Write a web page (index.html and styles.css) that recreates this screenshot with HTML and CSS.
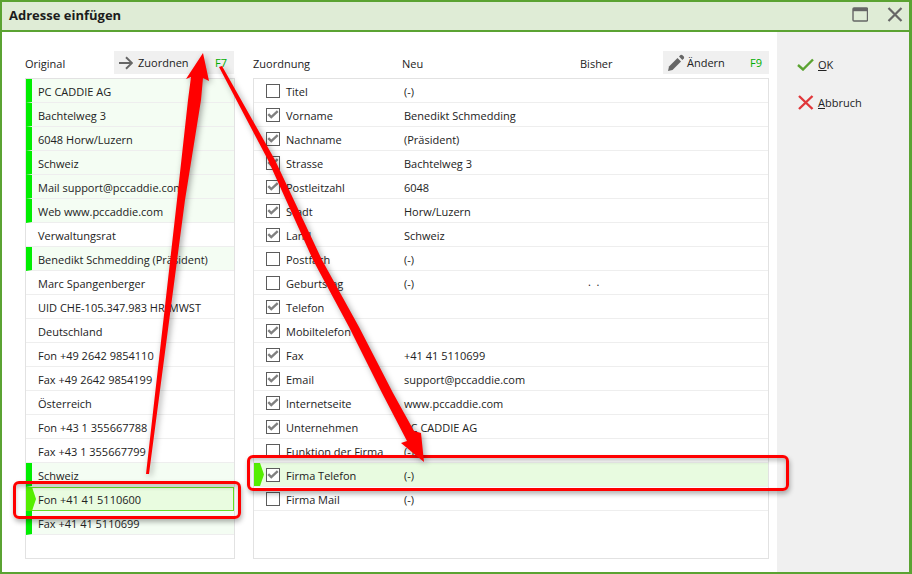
FILE: index.html
```html
<!DOCTYPE html>
<html lang="de">
<head>
<meta charset="utf-8">
<title>Adresse einfügen</title>
<link rel="stylesheet" href="styles.css">
</head>
<body>
<div class="window">
  <header class="titlebar">
    <h1 class="title">Adresse einfügen</h1>
    <div class="winctl">
      <svg class="ico-max" width="16" height="15" viewBox="0 0 16 15"><rect x="1" y="1" width="14.5" height="13" rx="1" fill="none" stroke="#666" stroke-width="1.4"/><rect x="1" y="1" width="14.5" height="3.2" fill="#666"/></svg>
      <svg class="ico-close" width="16" height="15" viewBox="0 0 16 15"><path d="M1.5 1 L14.5 14 M14.5 1 L1.5 14" stroke="#666" stroke-width="2.2" fill="none"/></svg>
    </div>
  </header>
  <div class="body">
    <main class="main">
      <section class="col col-left">
        <div class="head head-left">
          <span>Original</span>
          <div class="btn btn-assign">
            <svg width="14" height="14" viewBox="0 0 14 14"><path d="M0 7 H13 M7 1.2 L13 7 L7 12.8" fill="none" stroke="#666" stroke-width="1.9"/></svg>
            <span class="btn-label">Zuordnen</span>
            <span class="key">F7</span>
          </div>
        </div>
        <div class="list">
          <div class="row flag">PC CADDIE AG</div>
          <div class="row flag">Bachtelweg 3</div>
          <div class="row flag">6048 Horw/Luzern</div>
          <div class="row flag">Schweiz</div>
          <div class="row flag">Mail support@pccaddie.com</div>
          <div class="row flag">Web www.pccaddie.com</div>
          <div class="row">Verwaltungsrat</div>
          <div class="row flag">Benedikt Schmedding (Präsident)</div>
          <div class="row">Marc Spangenberger</div>
          <div class="row">UID CHE-105.347.983 HR/MWST</div>
          <div class="row">Deutschland</div>
          <div class="row">Fon +49 2642 9854110</div>
          <div class="row">Fax +49 2642 9854199</div>
          <div class="row">Österreich</div>
          <div class="row">Fon +43 1 355667788</div>
          <div class="row">Fax +43 1 355667799</div>
          <div class="row flag">Schweiz</div>
          <div class="row flag selected">Fon +41 41 5110600</div>
          <div class="row flag">Fax +41 41 5110699</div>
        </div>
      </section>
      <section class="col col-right">
        <div class="head head-right">
          <span>Zuordnung</span>
          <span>Neu</span>
          <span>Bisher</span>
          <div class="btn btn-change">
            <svg width="18" height="18" viewBox="0 0 18 18"><path d="M1 17 L2 12.5 L10.5 4 L14 7.5 L5.5 16 Z" fill="#666"/><path d="M12 2.5 L13.5 1 Q14.5 0.4 15.5 1.2 L16.8 2.5 Q17.5 3.5 16.8 4.5 L15.3 6 Z" fill="#666"/></svg>
            <span class="btn-label">Ändern</span>
            <span class="key">F9</span>
          </div>
        </div>
        <div class="list">
          <div class="row map"><span class="cb"></span><span class="lab">Titel</span><span>(-)</span></div>
          <div class="row map"><span class="cb on"><svg viewBox="0 0 14 14"><path d="M1.5 6 L5 9.5 L12.5 2.5" fill="none" stroke="#808080" stroke-width="2.8"/></svg></span><span class="lab">Vorname</span><span>Benedikt Schmedding</span></div>
          <div class="row map"><span class="cb on"><svg viewBox="0 0 14 14"><path d="M1.5 6 L5 9.5 L12.5 2.5" fill="none" stroke="#808080" stroke-width="2.8"/></svg></span><span class="lab">Nachname</span><span>(Präsident)</span></div>
          <div class="row map"><span class="cb on"><svg viewBox="0 0 14 14"><path d="M1.5 6 L5 9.5 L12.5 2.5" fill="none" stroke="#808080" stroke-width="2.8"/></svg></span><span class="lab">Strasse</span><span>Bachtelweg 3</span></div>
          <div class="row map"><span class="cb on"><svg viewBox="0 0 14 14"><path d="M1.5 6 L5 9.5 L12.5 2.5" fill="none" stroke="#808080" stroke-width="2.8"/></svg></span><span class="lab">Postleitzahl</span><span>6048</span></div>
          <div class="row map"><span class="cb on"><svg viewBox="0 0 14 14"><path d="M1.5 6 L5 9.5 L12.5 2.5" fill="none" stroke="#808080" stroke-width="2.8"/></svg></span><span class="lab">Stadt</span><span>Horw/Luzern</span></div>
          <div class="row map"><span class="cb on"><svg viewBox="0 0 14 14"><path d="M1.5 6 L5 9.5 L12.5 2.5" fill="none" stroke="#808080" stroke-width="2.8"/></svg></span><span class="lab">Land</span><span>Schweiz</span></div>
          <div class="row map"><span class="cb"></span><span class="lab">Postfach</span><span>(-)</span></div>
          <div class="row map"><span class="cb"></span><span class="lab">Geburtstag</span><span>(-)</span><span class="old">.&nbsp;&nbsp;.</span></div>
          <div class="row map"><span class="cb on"><svg viewBox="0 0 14 14"><path d="M1.5 6 L5 9.5 L12.5 2.5" fill="none" stroke="#808080" stroke-width="2.8"/></svg></span><span class="lab">Telefon</span><span></span></div>
          <div class="row map"><span class="cb on"><svg viewBox="0 0 14 14"><path d="M1.5 6 L5 9.5 L12.5 2.5" fill="none" stroke="#808080" stroke-width="2.8"/></svg></span><span class="lab">Mobiltelefon</span><span></span></div>
          <div class="row map"><span class="cb on"><svg viewBox="0 0 14 14"><path d="M1.5 6 L5 9.5 L12.5 2.5" fill="none" stroke="#808080" stroke-width="2.8"/></svg></span><span class="lab">Fax</span><span>+41 41 5110699</span></div>
          <div class="row map"><span class="cb on"><svg viewBox="0 0 14 14"><path d="M1.5 6 L5 9.5 L12.5 2.5" fill="none" stroke="#808080" stroke-width="2.8"/></svg></span><span class="lab">Email</span><span>support@pccaddie.com</span></div>
          <div class="row map"><span class="cb on"><svg viewBox="0 0 14 14"><path d="M1.5 6 L5 9.5 L12.5 2.5" fill="none" stroke="#808080" stroke-width="2.8"/></svg></span><span class="lab">Internetseite</span><span>www.pccaddie.com</span></div>
          <div class="row map"><span class="cb on"><svg viewBox="0 0 14 14"><path d="M1.5 6 L5 9.5 L12.5 2.5" fill="none" stroke="#808080" stroke-width="2.8"/></svg></span><span class="lab">Unternehmen</span><span>PC CADDIE AG</span></div>
          <div class="row map"><span class="cb"></span><span class="lab">Funktion der Firma</span><span>(-)</span></div>
          <div class="row map active"><span class="cb on"><svg viewBox="0 0 14 14"><path d="M1.5 6 L5 9.5 L12.5 2.5" fill="none" stroke="#808080" stroke-width="2.8"/></svg></span><span class="lab">Firma Telefon</span><span>(-)</span></div>
          <div class="row map"><span class="cb"></span><span class="lab">Firma Mail</span><span>(-)</span></div>
        </div>
      </section>
    </main>
    <aside class="side">
      <div class="action">
        <svg width="17" height="13" viewBox="0 0 17 13"><path d="M1 7 L6 11.5 L16 1.5" fill="none" stroke="#5ba332" stroke-width="2.4"/></svg>
        <span><u>O</u>K</span>
      </div>
      <div class="action">
        <svg width="17" height="15" viewBox="0 0 17 15"><path d="M2 1 L15.5 14 M15.5 1 L2 14" fill="none" stroke="#e0373a" stroke-width="2.4"/></svg>
        <span><u>A</u>bbruch</span>
      </div>
    </aside>
  </div>
  <div class="mark mark-left"></div>
  <div class="mark mark-right"></div>
  <svg class="arrows" width="912" height="574" viewBox="0 0 912 574">
    <polygon points="203,53 209,81 203,78 201,100 185,200 149,474 146,474 177,200 188,100 191,77 186,79" fill="#ff0000"/>
    <polygon points="219,67 222,66 275,160 322,260 359,327 393,393 414,431 421,433 424,462 401,443 407,441 382,393 349,327 313,260 268,160" fill="#ff0000"/>
  </svg>
</div>
</body>
</html>
```
FILE: styles.css
```css
* { box-sizing: border-box; }
html, body { margin: 0; padding: 0; }
body {
  font-family: "Open Sans", "Noto Sans", sans-serif;
  font-size: 11px;
  color: #222;
  background: #fff;
}
.window {
  position: relative;
  width: 912px;
  height: 574px;
  border: solid #5ba332;
  border-width: 2px 3px 2px 2px;
  display: flex;
  flex-direction: column;
  overflow: hidden;
}
.titlebar {
  height: 30px;
  flex: none;
  background: #dfecd6;
  border-bottom: 2px solid #5ba332;
  display: flex;
  align-items: center;
  justify-content: space-between;
  padding: 0 6px 3px 7px;
}
.title {
  margin: 0;
  font-size: 13px;
  font-weight: 700;
  color: #1c1c1c;
}
.winctl { display: flex; align-items: center; gap: 19px; }
.winctl svg { display: block; }
.body { flex: 1; display: flex; min-height: 0; }
.main {
  flex: 1;
  display: flex;
  gap: 18px;
  padding: 19px 8px 13px 23px;
}
.col { display: flex; flex-direction: column; }
.col-left { width: 210px; }
.col-right { width: 516px; }
.head { height: 23px; margin-bottom: 4px; flex: none; font-size: 11px; }
.head-left { display: flex; align-items: center; justify-content: space-between; }
.head-right {
  display: grid;
  grid-template-columns: 149px 178px 83px 106px;
  align-items: center;
}
.head > span { position: relative; top: 1px; }
.btn {
  height: 23px;
  background: #f0f0f0;
  display: flex;
  align-items: center;
}
.btn svg { flex: none; display: block; }
.btn-label { flex: 1; }
.key { color: #00ad00; }
.btn-assign { width: 120px; margin-right: 1px; padding: 0 7px 0 5px; gap: 5px; }
.btn-change { width: 106px; padding: 0 7px 0 4px; gap: 2px; }
.list {
  flex: 1;
  border: 1px solid #e2e2e2;
  background: #fff;
}
.row {
  height: 24px;
  border-bottom: 1px solid #eeeeee;
  display: flex;
  align-items: center;
  padding: 1px 0 0 12px;
  position: relative;
  white-space: nowrap;
}
.row.flag {
  border-left: 6px solid #00ee00;
  padding-left: 6px;
  background: #f4fdf3;
}
.row.selected {
  background: #e9fce0;
  outline: 1px solid #66dd22;
  outline-offset: -1px;
  border-bottom-color: transparent;
}
.row.selected::before {
  content: "";
  position: absolute;
  left: -6px;
  top: 0;
  width: 10px;
  height: 24px;
  background: #55ee00;
  clip-path: polygon(0 0, 60% 0, 100% 50%, 60% 100%, 0 100%);
}
.map { display: flex; }
.cb {
  width: 14px;
  height: 14px;
  border: 1px solid #5c5c5c;
  background: #fff;
  flex: none;
  margin-right: 6px;
  display: block;
}
.cb svg { display: block; width: 12px; height: 12px; }
.lab { width: 118px; flex: none; }
.old { position: absolute; left: 334px; top: 3px; }
.active { background: #e8fbe0; }
.active::before {
  content: "";
  position: absolute;
  left: 0;
  top: 0;
  width: 10px;
  height: 23px;
  background: #55ee00;
  clip-path: polygon(0 0, 60% 0, 100% 50%, 60% 100%, 0 100%);
}
.side {
  width: 132px;
  flex: none;
  background: #f0f0f0;
  padding: 21px 0 0 20px;
  display: flex;
  flex-direction: column;
  gap: 15px;
}
.action { height: 23px; display: flex; align-items: center; gap: 4px; }
.action svg { display: block; flex: none; }
.mark {
  position: absolute;
  border: 3px solid #ff0000;
  border-radius: 6px;
  box-shadow: 1px 3px 5px rgba(0,0,0,.3), inset 0 3px 4px rgba(0,0,0,.22);
}
.mark-left { left: 11px; top: 479px; width: 228px; height: 38px; }
.mark-right { left: 245px; top: 453px; width: 542px; height: 36px; }
.arrows {
  position: absolute;
  left: -2px;
  top: -2px;
  filter: drop-shadow(2px 2px 3px rgba(0,0,0,.35));
  pointer-events: none;
}
```
